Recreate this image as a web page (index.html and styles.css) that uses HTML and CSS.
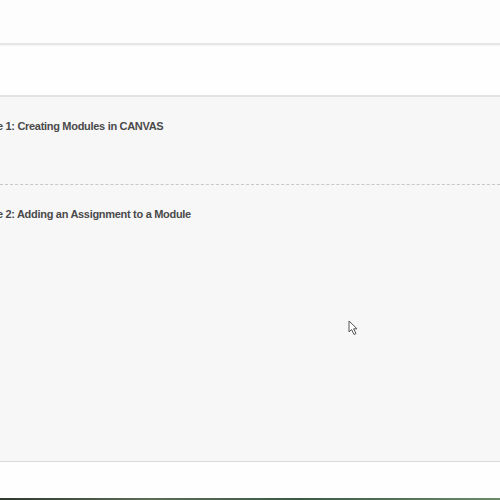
FILE: index.html
```html
<!DOCTYPE html>
<html>
<head>
<meta charset="utf-8">
<link rel="stylesheet" href="styles.css">
</head>
<body>
<div class="page">
  <header class="topbar"></header>
  <div class="subbar"></div>
  <main class="modules">
    <section class="module">
      <h2 class="module-title">Module 1: Creating Modules in CANVAS</h2>
    </section>
    <section class="module">
      <h2 class="module-title">Module 2: Adding an Assignment to a Module</h2>
    </section>
  </main>
  <footer class="footer"></footer>
  <div class="taskbar"></div>
</div>
<svg class="cursor" width="12" height="16" viewBox="0 0 12 16">
  <path d="M1 1 L1 12 L3.5 9.5 L6 14.5 L8 13.5 L5.6 8.8 L9 8.8 Z" fill="#fff" stroke="#555" stroke-width="1" stroke-linejoin="round"/>
</svg>
</body>
</html>
```
FILE: styles.css
```css
html, body {
  margin: 0;
  padding: 0;
  width: 500px;
  height: 500px;
  overflow: hidden;
  background: #fff;
  font-family: "Liberation Sans", Arial, sans-serif;
}
.page {
  display: flex;
  flex-direction: column;
  height: 500px;
}
.topbar {
  height: 43px;
  background: #fefdfe;
  border-bottom: 2px solid #e6e6e8;
  flex: none;
}
.subbar {
  height: 49px;
  background: #fefefe;
  border-top: 1px solid #f4f4f6;
  border-bottom: 2px solid #e3e3e6;
  flex: none;
}
.modules {
  flex: none;
  height: 364px;
  background: #f7f7f8;
  border-bottom: 1px solid #d9d9db;
  overflow: hidden;
}
.module {
  height: 87px;
  overflow: hidden;
}
.module + .module {
  border-top: 1px dashed #c8c8c8;
}
.module-title {
  margin: 23px 0 0 -34px;
  font-size: 11px;
  font-weight: bold;
  letter-spacing: -0.3px;
  color: #4a4a4a;
  white-space: nowrap;
}
.footer {
  flex: 1;
  background: #fefefe;
}
.taskbar {
  height: 2px;
  flex: none;
  background: linear-gradient(90deg, #2f3a30 0%, #5a6d55 30%, #3d5a44 60%, #6d8a6a 100%);
}
.cursor {
  position: absolute;
  left: 348px;
  top: 320px;
}
```
